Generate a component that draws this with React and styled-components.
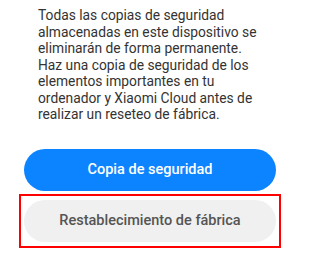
import styled, { createGlobalStyle } from "styled-components";

const GlobalStyle = createGlobalStyle`
    html, body {
        margin: 0;
        padding: 0;
        background: #ffffff;
    }
    body {
        font-family: Roboto, "Noto Sans", "Liberation Sans", sans-serif;
        -webkit-font-smoothing: antialiased;
    }
`;

const App = () => {
    return (
        <Page>
            <GlobalStyle />
            <Notice>
                Todas las copias de seguridad almacenadas en este dispositivo se
                eliminarán de forma permanente. Haz una copia de seguridad de los
                elementos importantes en tu ordenador y Xiaomi Cloud antes de
                realizar un reseteo de fábrica.
            </Notice>
            <Actions>
                <PillButton $variant="primary">Copia de seguridad</PillButton>
                <Highlight>
                    <PillButton $variant="secondary">
                        Restablecimiento de fábrica
                    </PillButton>
                </Highlight>
            </Actions>
        </Page>
    );
};

export default App;

const Page = styled.div`
    width: 300px;
    height: 267px;
    background: #ffffff;
    overflow: hidden;
`;

const Notice = styled.p`
    margin: 0;
    padding: 7px 36px 0 38px;
    font-size: 13.8px;
    line-height: 16.5px;
    color: #333333;
`;

const Actions = styled.div`
    display: flex;
    flex-direction: column;
    gap: 3px;
    margin-top: 26px;
    padding: 0 19px;
`;

const Highlight = styled.div`
    border: 2px solid #ff0000;
    padding: 4px 3px;
`;

const PillButton = styled.button`
    display: flex;
    align-items: center;
    justify-content: center;
    width: ${({ $variant }) => ($variant === "primary" ? "252px" : "100%")};
    align-self: center;
    height: 42px;
    border: none;
    border-radius: 21px;
    font-family: Roboto, "Noto Sans", "Liberation Sans", sans-serif;
    font-size: 14.5px;
    font-weight: 500;
    background: ${({ $variant }) =>
        $variant === "primary" ? "#0d84ff" : "#f0f0f0"};
    color: ${({ $variant }) => ($variant === "primary" ? "#ffffff" : "#555555")};
    cursor: pointer;
`;
